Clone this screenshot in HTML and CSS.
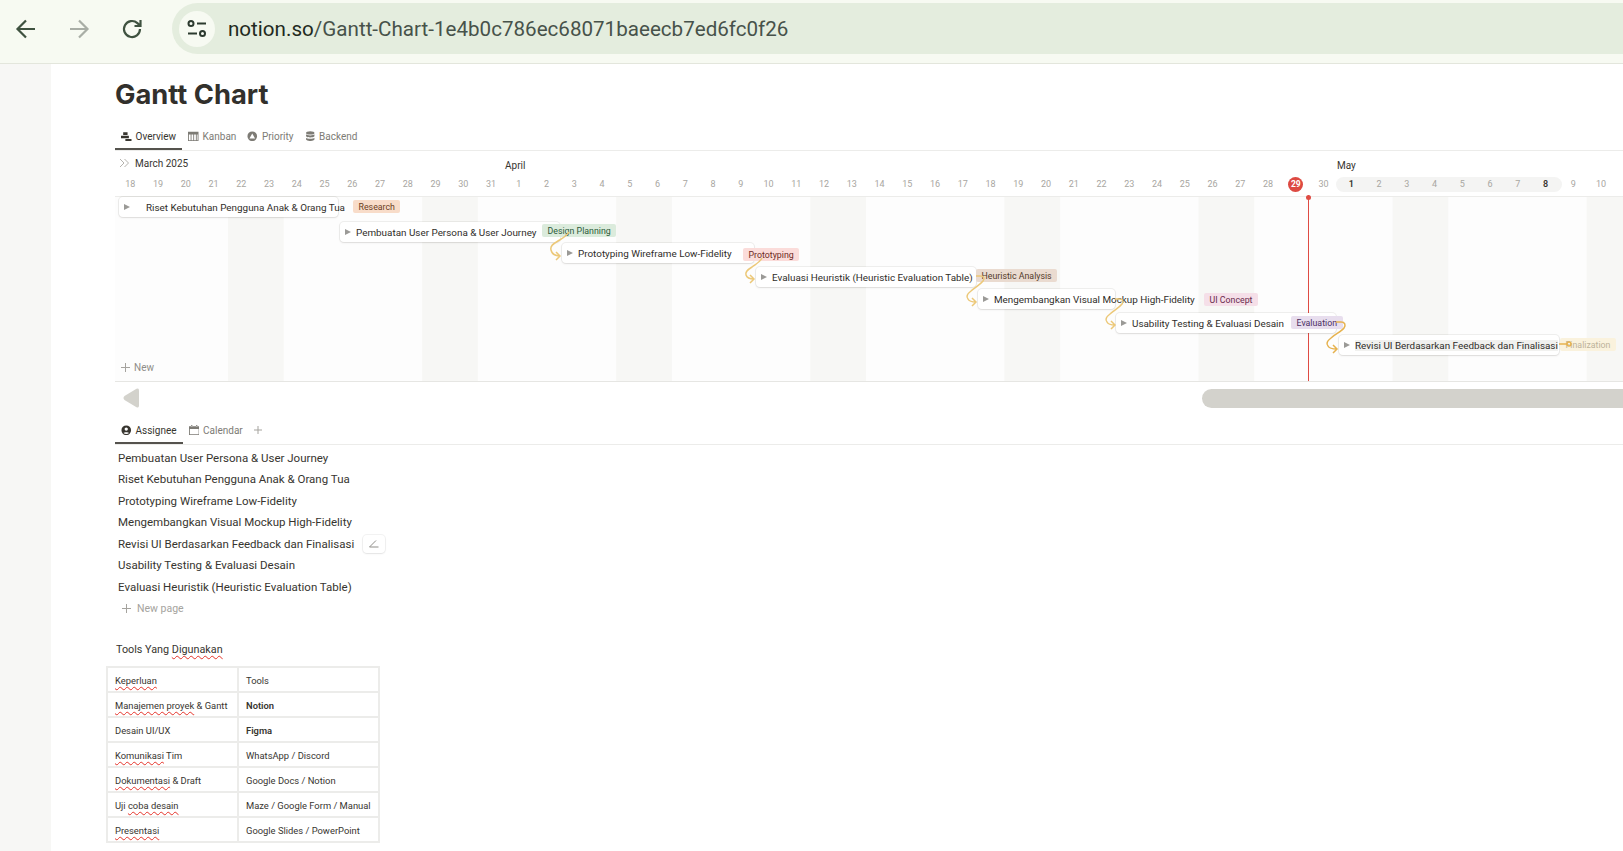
FILE: index.html
```html
<!DOCTYPE html>
<html lang="en">
<head>
<meta charset="utf-8">
<title>Gantt Chart</title>
<link rel="stylesheet" href="styles.css">
</head>
<body>
<header class="toolbar">
  <svg class="nav nav-back" width="24" height="24" viewBox="0 0 24 24"><path d="M21 12H4M12 3.500 3.500 12l8.500 8.500"/></svg>
  <svg class="nav nav-forward" width="24" height="24" viewBox="0 0 24 24"><path d="M3 12h17M12 3.500l8.500 8.500-8.500 8.500"/></svg>
  <svg class="nav nav-reload" width="24" height="24" viewBox="0 0 24 24"><path d="M20 12a8 8 0 1 1-2.600-5.900L20 8.500M20.500 3v6h-6"/></svg>
  <div class="omnibox">
    <span class="site-btn">
      <svg width="20" height="18" viewBox="0 0 20 18"><circle cx="4" cy="3.500" r="2.500"/><path d="M10 3.500h9M1 13.500h9"/><circle cx="15.500" cy="13.500" r="2.500"/></svg>
    </span>
    <span class="url">notion.so<span class="url-path">/Gantt-Chart-1e4b0c786ec68071baeecb7ed6fc0f26</span></span>
  </div>
</header>

<div class="page">
  <aside class="side"></aside>
  <main class="main">
    <h1 class="title">Gantt Chart</h1>

    <nav class="tabs tabs-top">
      <span class="tab active"><svg viewBox="0 0 12 12"><path d="M2.500 1.500h5v3h-5zM0 5.500h9v2.800H0zM5 9h7v2.800H5z"/></svg>Overview</span>
      <span class="tab"><svg viewBox="0 0 12 12"><path d="M0 .8h12v10.700H0zM1 4v6.500h2V4zm3 0v6.500h2V4zm3 0v6.500h2V4zm3 0v6.500h1V4z" fill-rule="evenodd"/></svg>Kanban</span>
      <span class="tab"><svg viewBox="0 0 12 12"><path d="M6 .5a5.500 5.500 0 1 1 0 11 5.500 5.500 0 0 1 0-11zM6 2.800 2.800 8.500h6.400z" fill-rule="evenodd"/></svg>Priority</span>
      <span class="tab"><svg viewBox="0 0 12 12"><ellipse cx="6" cy="2.200" rx="4.800" ry="1.900"/><path d="M1.200 3.800c1 1.600 8.600 1.600 9.600 0v2.200c-1 1.800-8.600 1.800-9.600 0zM1.200 7.600c1 1.600 8.600 1.600 9.600 0v2.200c-1 2.200-8.600 2.200-9.600 0z"/></svg>Backend</span>
    </nav>

    <section class="gantt">
      <div class="months">
        <svg class="collapse" width="11" height="10" viewBox="0 0 11 10"><path d="M1 1l4 4-4 4M5.500 1l4 4-4 4"/></svg>
        <span class="month">March 2025</span>
        <span class="month month-april">April</span>
        <span class="month month-may">May</span>
      </div>
      <div class="days">
        <span class="day">18</span><span class="day">19</span><span class="day">20</span><span class="day">21</span><span class="day">22</span><span class="day">23</span><span class="day">24</span><span class="day">25</span><span class="day">26</span><span class="day">27</span><span class="day">28</span><span class="day">29</span><span class="day">30</span><span class="day">31</span>
        <span class="day">1</span><span class="day">2</span><span class="day">3</span><span class="day">4</span><span class="day">5</span><span class="day">6</span><span class="day">7</span><span class="day">8</span><span class="day">9</span><span class="day">10</span><span class="day">11</span><span class="day">12</span><span class="day">13</span><span class="day">14</span><span class="day">15</span><span class="day">16</span><span class="day">17</span><span class="day">18</span><span class="day">19</span><span class="day">20</span><span class="day">21</span><span class="day">22</span><span class="day">23</span><span class="day">24</span><span class="day">25</span><span class="day">26</span><span class="day">27</span><span class="day">28</span>
        <span class="day day-today"><b>29</b></span><span class="day">30</span>
        <span class="range">
          <span class="day day-edge">1</span><span class="day">2</span><span class="day">3</span><span class="day">4</span><span class="day">5</span><span class="day">6</span><span class="day">7</span><span class="day day-edge">8</span>
        </span>
        <span class="day">9</span><span class="day">10</span>
      </div>

      <div class="canvas">
        <span class="today-line"></span>

        <div class="bar" style="left:4px;top:0;width:219px"><i class="caret"></i><span class="bar-text bar-text-wide">Riset Kebutuhan Pengguna Anak &amp; Orang Tua</span></div>
        <span class="tag t-orange" style="left:238px;top:3px">Research</span>

        <div class="bar" style="left:225px;top:25px;width:220px"><i class="caret"></i><span class="bar-text">Pembuatan User Persona &amp; User Journey</span></div>
        <span class="tag t-green" style="left:427px;top:27px">Design Planning</span>

        <div class="bar" style="left:447px;top:46px;width:192px"><i class="caret"></i><span class="bar-text">Prototyping Wireframe Low-Fidelity</span></div>
        <span class="tag t-red" style="left:628px;top:51px">Prototyping</span>

        <div class="bar" style="left:641px;top:70px;width:220px"><i class="caret"></i><span class="bar-text">Evaluasi Heuristik (Heuristic Evaluation Table)</span></div>
        <span class="tag t-brown" style="left:861px;top:72px">Heuristic Analysis</span>

        <div class="bar" style="left:863px;top:92px;width:137px"><i class="caret"></i><span class="bar-text">Mengembangkan Visual Mockup High-Fidelity</span></div>
        <span class="tag t-pink" style="left:1089px;top:96px">UI Concept</span>

        <div class="bar" style="left:1001px;top:116px;width:220px"><i class="caret"></i><span class="bar-text">Usability Testing &amp; Evaluasi Desain</span></div>
        <span class="tag t-purple" style="left:1176px;top:119px">Evaluation</span>

        <div class="bar bar-hover" style="left:1224px;top:138px;width:220px"><i class="caret"></i><span class="bar-text">Revisi UI Berdasarkan Feedback dan Finalisasi</span></div>
        <span class="tag t-yellow" style="left:1445px;top:141px">Finalization</span>

        <svg class="links" width="1508" height="185" viewBox="115 197 1508 185">
          <path d="M569 232c-2 4-6 6-11 9-5 3-8 5-7 9 1 4 4 6 9 6M556 252l4 4-4 4"/>
          <path d="M762 258c-2 4-6 6-10 9-5 3-7 5-6 8 1 3 3 4 8 4M750 275l4 4-4 4"/>
          <path d="M976 276h4c4 0 5 2 3 5-3 4-8 6-12 10-4 3-5 6-3 8 1 2 4 3 8 3M972 298l4 4-4 4"/>
          <path d="M1115 299h4c4 0 5 2 3 5-3 4-8 6-12 10-4 3-5 6-3 8 1 2 4 3 8 3M1111 321l4 4-4 4"/>
          <path class="link-strong" d="M1336 322h5c4 0 5 3 3 6-3 4-9 6-13 10-4 3-5 6-3 8 1 2 4 3 9 3M1333 345l4 4-4 4"/>
          <path class="link-strong" d="M1559 344h8"/><circle class="link-strong" cx="1569" cy="344" r="2"/>
        </svg>

        <span class="new-row">
          <svg width="9" height="9" viewBox="0 0 9 9"><path d="M4.500 0v9M0 4.500h9"/></svg>New
        </span>
      </div>

      <div class="scroll">
        <svg class="scroll-arrow" width="16" height="20" viewBox="0 0 16 20"><path d="M13.500 .8Q16 -.5 16 2.500V17.500Q16 20.500 13.500 19.200L1.500 12Q-.5 10 1.500 8Z"/></svg>
        <span class="scroll-thumb"></span>
      </div>
    </section>

    <nav class="tabs tabs-low">
      <span class="tab active"><svg viewBox="0 0 12 12"><path d="M6 .5a5.500 5.500 0 1 1 0 11 5.500 5.500 0 0 1 0-11zm0 2.300a1.900 1.900 0 1 0 0 3.800 1.900 1.900 0 0 0 0-3.800zM2.800 9.200c1.600 1.500 4.800 1.500 6.400 0-.8-1.300-5.600-1.300-6.400 0z" fill-rule="evenodd"/></svg>Assignee</span>
      <span class="tab"><svg viewBox="0 0 12 12"><path d="M0 1.500h12v10H0zM1 4.500v6h10v-6zM2.500 0h1.300v2H2.500zM8.200 0h1.300v2H8.200z" fill-rule="evenodd"/></svg>Calendar</span>
      <svg class="tab-plus" width="8" height="8" viewBox="0 0 8 8"><path d="M4 0v8M0 4h8"/></svg>
    </nav>

    <ul class="pages">
      <li class="page-row">Pembuatan User Persona &amp; User Journey</li>
      <li class="page-row">Riset Kebutuhan Pengguna Anak &amp; Orang Tua</li>
      <li class="page-row">Prototyping Wireframe Low-Fidelity</li>
      <li class="page-row">Mengembangkan Visual Mockup High-Fidelity</li>
      <li class="page-row">Revisi UI Berdasarkan Feedback dan Finalisasi
        <span class="edit-btn"><svg width="10" height="9" viewBox="0 0 10 9"><path d="M.5 8h9M.5 8 7 1.500"/></svg></span>
      </li>
      <li class="page-row">Usability Testing &amp; Evaluasi Desain</li>
      <li class="page-row">Evaluasi Heuristik (Heuristic Evaluation Table)</li>
      <li class="page-row new-page"><svg width="9" height="9" viewBox="0 0 9 9"><path d="M4.500 0v9M0 4.500h9"/></svg>New page</li>
    </ul>

    <p class="tools-title">Tools Yang <span class="sq">Digunakan</span></p>
    <table class="tools">
      <tr><td><span class="sq">Keperluan</span></td><td>Tools</td></tr>
      <tr><td><span class="sq">Manajemen proyek</span> &amp; Gantt</td><td><b>Notion</b></td></tr>
      <tr><td>Desain UI/UX</td><td><b>Figma</b></td></tr>
      <tr><td><span class="sq">Komunikasi</span> Tim</td><td>WhatsApp / Discord</td></tr>
      <tr><td><span class="sq">Dokumentasi</span> &amp; Draft</td><td>Google Docs / Notion</td></tr>
      <tr><td>Uji <span class="sq">coba desain</span></td><td>Maze / Google Form / Manual</td></tr>
      <tr><td><span class="sq">Presentasi</span></td><td>Google Slides / PowerPoint</td></tr>
    </table>
  </main>
</div>
</body>
</html>
```
FILE: styles.css
```css
* { box-sizing: border-box; }
html, body { margin: 0; height: 100%; }
body {
  width: 1623px;
  height: 851px;
  overflow: hidden;
  background: #fff;
  color: #37352f;
  font-family: "Roboto", "Open Sans", sans-serif;
}

/* browser toolbar */
.toolbar {
  display: flex;
  align-items: center;
  height: 64px;
  padding: 3px 0 9px 14px;
  background: #f7faf2;
  border-bottom: 1px solid #e3e6dc;
}
.nav { fill: none; stroke-width: 2.200; flex: none; }
.nav-back { stroke: #3f5240; }
.nav-forward { stroke: #a9aea6; margin-left: 29px; }
.nav-reload { stroke: #3f5240; margin-left: 29px; }
.omnibox {
  display: flex;
  align-items: center;
  flex: 1;
  height: 51px;
  margin-left: 28px;
  padding-left: 7px;
  background: #e4edde;
  border-radius: 26px 0 0 26px;
}
.site-btn {
  display: flex;
  align-items: center;
  justify-content: center;
  width: 36px;
  height: 36px;
  border-radius: 50%;
  background: #f7faf2;
}
.site-btn svg { fill: none; stroke: #2c3a2f; stroke-width: 2; }
.url {
  margin-left: 13px;
  font-family: "Roboto", "Open Sans", sans-serif;
  font-size: 20.600px;
  color: #1f2a21;
  white-space: nowrap;
}
.url-path { color: #47524a; }

/* page */
.page { display: flex; height: 787px; }
.side { width: 51px; flex: none; background: #f7f7f5; }
.main { flex: 1; min-width: 0; padding-left: 64px; overflow: hidden; }
.title {
  margin: 14px 0 0;
  height: 33px;
  font-family: "Inter", sans-serif;
  font-size: 27.300px;
  line-height: 33px;
  font-weight: 700;
  color: #32302c;
}

/* tabs */
.tabs { display: flex; align-items: center; border-bottom: 1px solid #ececea; }
.tabs-top { margin-top: 13px; height: 27px; }
.tabs-low { margin-top: 6px; height: 27px; }
.tab {
  display: flex;
  align-items: center;
  gap: 4px;
  height: 100%;
  padding: 0 5px 2px 6px;
  font-size: 10px;
  color: #7d7b75;
  white-space: nowrap;
}
.tab svg { width: 10.500px; height: 10.500px; fill: #7d7b75; }
.tab.active { color: #37352f; box-shadow: inset 0 -2px 0 #55534e; padding-right: 6px; }
.tab.active svg { fill: #37352f; }
.tab-plus { margin-left: 6px; margin-bottom: 2px; fill: none; stroke: #a5a39e; }

/* gantt */
.gantt { position: relative; }
.months {
  position: relative;
  height: 23px;
  font-size: 10px;
  color: #37352f;
}
.collapse { position: absolute; left: 4px; top: 7px; fill: none; stroke: #b5b3ae; }
.month { position: absolute; left: 20px; top: 7px; white-space: nowrap; }
.month-april { left: 390px; top: 9px; }
.month-may { left: 1222px; top: 9px; }
.days {
  display: flex;
  align-items: center;
  height: 23px;
  padding-left: 1.500px;
  padding-bottom: 2px;
  border-bottom: 1px solid #ececea;
}
.day {
  flex: none;
  width: 27.760px;
  text-align: center;
  font-size: 9px;
  color: #a8a6a1;
}
.day-today b {
  display: inline-block;
  width: 15px;
  height: 15px;
  border-radius: 50%;
  background: #dd4a42;
  color: #fff;
  line-height: 15px;
  font-weight: 700;
  font-size: 8.500px;
}
.range {
  display: flex;
  flex: none;
  align-items: center;
  height: 15px;
  margin: 0 -2px;
  padding: 0 2px;
  background: #f4f4f3;
  border-radius: 8px;
}
.day-edge { color: #37352f; font-weight: 600; }

.canvas {
  position: relative;
  height: 185px;
  background:
    linear-gradient(90deg, #f7f7f5 55.500px, transparent 0) 113px 0 / 194.100px 100% repeat-x,
    #fdfdfd;
  border-bottom: 1px solid #e6e6e3;
}
.bar {
  position: absolute;
  display: flex;
  align-items: center;
  height: 20px;
  background: #fff;
  border-radius: 4px;
  box-shadow: 0 0 0 1px rgba(55, 53, 47, .07), 0 1px 2px rgba(55, 53, 47, .1);
  white-space: nowrap;
}
.caret {
  flex: none;
  margin-left: 5px;
  width: 0;
  height: 0;
  border-left: 6px solid #9b9a97;
  border-top: 3.500px solid transparent;
  border-bottom: 3.500px solid transparent;
}
.bar-text { margin-left: 5px; font-size: 9.900px; color: #2f2d29; }
.bar-text-wide { margin-left: 16px; }
.bar-hover .bar-text { background: #f1f1ef; }
.tag {
  position: absolute;
  height: 13px;
  padding: 0 5.500px;
  border-radius: 2px;
  font-size: 8.800px;
  line-height: 14px;
  white-space: nowrap;
}
.t-orange { background: #f8dcc9; color: #6b3c1d; }
.t-green { background: #dbebdc; color: #2b5b3a; }
.t-red { background: #fbdcda; color: #6e2a24; }
.t-brown { background: #eadbd0; color: #533a2a; }
.t-pink { background: #f5dfe8; color: #6a2a4c; }
.t-purple { background: #e8deee; color: #4c2f63; }
.t-yellow { background: #faf2dd; color: #bdb39a; }
.links { position: absolute; left: 0; top: 0; fill: none; stroke: #ecc878; stroke-width: 1.500; pointer-events: none; }
.links .link-strong { stroke: #e6b24e; }
.today-line { position: absolute; left: 1193px; top: -2px; bottom: 0; width: 1.200px; background: #df4b43; }
.today-line::before {
  content: "";
  position: absolute;
  left: -2px;
  top: 0;
  width: 5px;
  height: 5px;
  border-radius: 50%;
  background: #df4b43;
}
.new-row {
  position: absolute;
  left: 6px;
  top: 165px;
  display: flex;
  align-items: center;
  gap: 4px;
  font-size: 10px;
  color: #8f8d88;
}
.new-row svg { fill: none; stroke: #a5a39e; }
.scroll { display: flex; justify-content: space-between; align-items: center; height: 30px; padding: 2px 0 0 8px; }
.scroll-arrow { fill: #d3d2cc; }
.scroll-thumb { width: 421px; height: 19px; background: #d3d2cc; border-radius: 10px 0 0 10px; }

/* list */
.pages { list-style: none; margin: 2px 0 0; padding: 0 0 0 3px; }
.page-row {
  display: flex;
  align-items: center;
  height: 21.500px;
  font-size: 11.500px;
  font-weight: 400;
  color: #37352f;
  white-space: nowrap;
}
.edit-btn {
  display: flex;
  align-items: center;
  justify-content: center;
  width: 22px;
  height: 18px;
  margin-left: 9px;
  background: #fff;
  border-radius: 4px;
  box-shadow: 0 0 0 1px rgba(55, 53, 47, .06), 0 1px 2px rgba(55, 53, 47, .08);
}
.edit-btn svg { fill: none; stroke: #8f8d88; }
.new-page { color: #a5a39e; font-size: 10.500px; gap: 6px; padding-left: 4px; }
.new-page svg { fill: none; stroke: #a5a39e; }

/* tools */
.tools-title { margin: 22px 0 0 1px; height: 17px; font-size: 10.800px; line-height: 17px; color: #37352f; }
.sq {
  text-decoration: underline wavy #e5332a 1px;
  text-underline-offset: 2px;
}
.tools {
  margin: 8px 0 0 -9px;
  border-collapse: collapse;
  table-layout: fixed;
  width: 274px;
  font-size: 9.400px;
  color: #37352f;
}
.tools td {
  height: 25px;
  padding: 2px 6px 0 7px;
  border: 2px solid #ececea;
  white-space: nowrap;
  vertical-align: middle;
}
.tools td:first-child { width: 131px; }
.tools b { font-weight: 600; }
```
